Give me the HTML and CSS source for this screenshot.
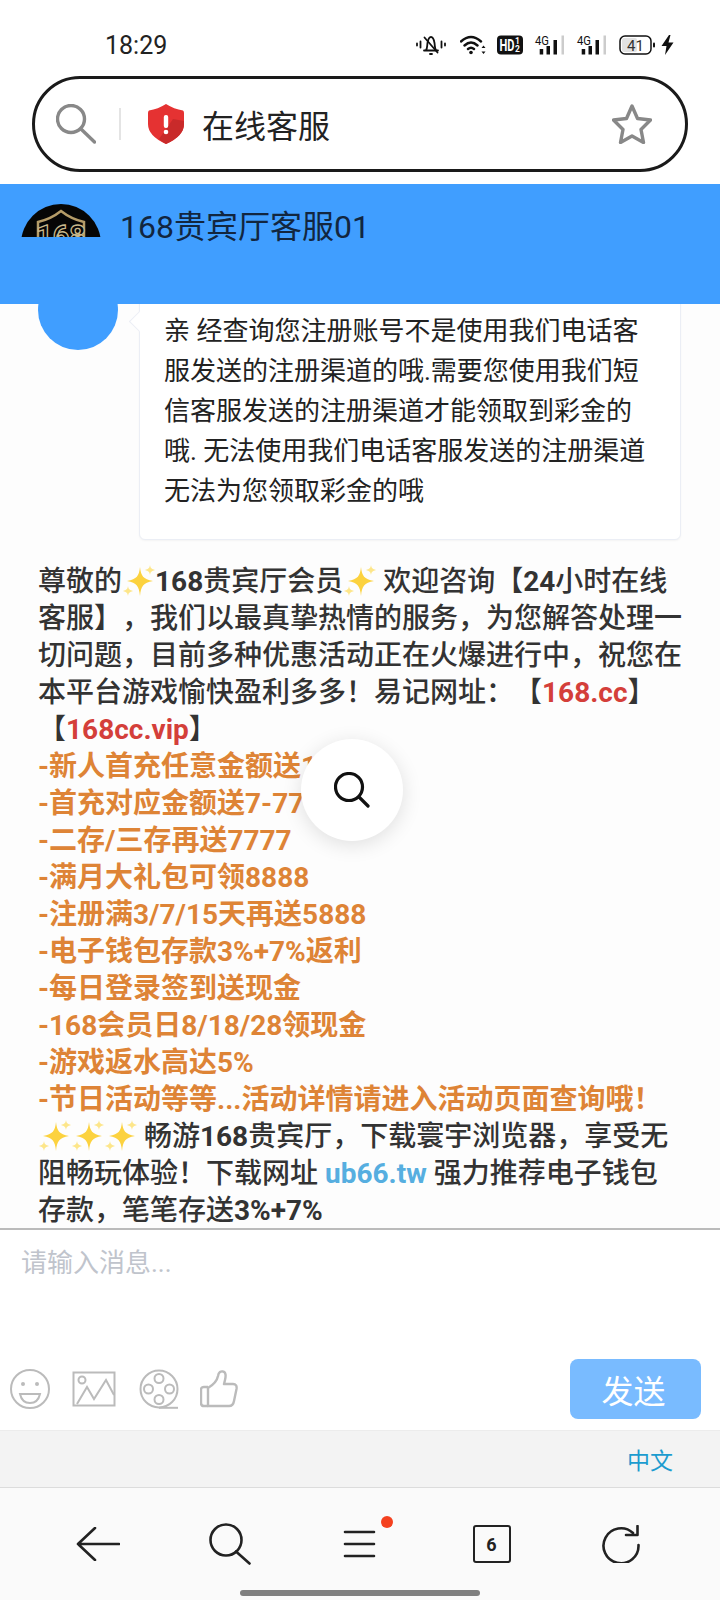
FILE: index.html
```html
<!DOCTYPE html>
<html>

<head>
  <title>在线客服</title>
  <link rel="stylesheet" href="styles.css">
</head>

<body>
  <svg class="defs" width="0" height="0">
    <symbol id="sparkle" viewBox="0 0 33 32">
      <path d="M18 2 C19 11 21 14 31 16 C21 18 19 21 18 31 C17 21 15 18 5 16 C15 14 17 11 18 2Z" fill="#fcd23f" />
      <path d="M28 0 C28.5 3 29.5 4 33 5 C29.5 6 28.5 7 28 10 C27.5 7 26.5 6 23 5 C26.5 4 27.5 3 28 0Z" fill="#fde68a" />
      <path d="M6 21 C6.5 24 7.5 25 11 26 C7.5 27 6.5 28 6 31 C5.5 28 4.5 27 1 26 C4.5 25 5.5 24 6 21Z" fill="#fde68a" />
    </symbol>
  </svg>

  <div class="app">
    <!-- status bar -->
    <div class="status">
      <span class="time">18:29</span>
      <div class="status-icons">
        <svg width="30" height="20" viewBox="0 0 30 20" fill="none" stroke="#111" stroke-width="1.8" stroke-linecap="round" stroke-linejoin="round">
          <path d="M1 8.5v2M4.5 6.5v6M25.5 6.5v6M29 8.5v2" />
          <path d="M8 15.5h14M10 15c1.5-2 1-4 1.5-7C12 5 13.5 2 15 2s3 3 3.5 6c.5 3 0 5 1.5 7" />
          <path d="M14 19h2M8.5 2.5l13 15" />
        </svg>
        <svg class="wifi" width="26" height="20" viewBox="0 0 26 20" fill="none" stroke="#111" stroke-width="2.4" stroke-linecap="round">
          <path d="M1 6.5Q11 -2.5 21 6.5M4.5 10.5Q11 4.5 17.5 10.5M8 14Q11 11.5 14 14" />
          <circle cx="11" cy="17.5" r="1.8" fill="#111" stroke="none" />
          <path d="M23.5 10.5l-2 2.5h4zM23.5 19l-2-2.5h4z" fill="#111" stroke="none" />
        </svg>
        <svg width="26" height="20" viewBox="0 0 26 20">
          <rect y="0.5" width="26" height="19" rx="4" fill="#111" />
          <text class="svg-text" x="2.5" y="15.5" font-size="16" font-weight="700" fill="#fff" textLength="15" lengthAdjust="spacingAndGlyphs">HD</text>
          <text class="svg-text" x="18" y="8.5" font-size="8.5" font-weight="700" fill="#fff">1</text>
          <text class="svg-text" x="18" y="17" font-size="8.5" font-weight="700" fill="#fff">2</text>
        </svg>
        <svg class="signal" width="30" height="20" viewBox="0 0 30 20">
          <text class="svg-text" x="0" y="10" font-size="13.5" fill="#111" textLength="14" lengthAdjust="spacingAndGlyphs">4G</text>
          <rect x="4.7" y="14" width="3.5" height="5.5" fill="#111" />
          <rect x="11.5" y="11" width="3.5" height="8.5" fill="#111" />
          <rect x="18.5" y="5" width="3.5" height="14.5" fill="#111" />
          <rect x="26.5" y="0.5" width="2.5" height="19" fill="#ccc" />
        </svg>
        <svg class="signal" width="30" height="20" viewBox="0 0 30 20">
          <text class="svg-text" x="0" y="10" font-size="13.5" fill="#111" textLength="14" lengthAdjust="spacingAndGlyphs">4G</text>
          <rect x="4.7" y="14" width="3.5" height="5.5" fill="#111" />
          <rect x="11.5" y="11" width="3.5" height="8.5" fill="#111" />
          <rect x="18.5" y="5" width="3.5" height="14.5" fill="#111" />
          <rect x="26.5" y="0.5" width="2.5" height="19" fill="#ccc" />
        </svg>
        <svg width="36" height="20" viewBox="0 0 36 20">
          <rect x="3" y="3" width="15" height="14" rx="2" fill="#e2e2e2" />
          <rect x="1" y="1" width="31" height="18" rx="5" fill="none" stroke="#111" stroke-width="1.5" />
          <rect x="34" y="7.5" width="2" height="5" rx="1" fill="#111" />
          <text class="svg-text" x="16.5" y="15.5" font-size="15" fill="#333" text-anchor="middle">41</text>
        </svg>
        <svg class="bolt" width="13" height="20" viewBox="0 0 13 20">
          <path d="M8 0 L0.5 11 H5.5 L4 20 L12.5 7.5 H7.5 L9.5 0Z" fill="#111" />
        </svg>
      </div>
    </div>

    <!-- address bar -->
    <div class="address">
      <svg class="address-search" width="40" height="40" viewBox="0 0 40 40" fill="none" stroke="#888" stroke-width="3.4" stroke-linecap="round">
        <circle cx="15" cy="15" r="13.5" />
        <path d="M25 25L38.5 38" />
      </svg>
      <span class="address-sep"></span>
      <svg class="shield" width="38" height="42" viewBox="0 0 38 42">
        <path d="M19 1Q27 6 36 7.5Q37 8 37 10V21Q37 33 19 41Q1 33 1 21V10Q1 8 2 7.5Q11 6 19 1Z" fill="#e53232" />
        <path d="M12 36L26 16L37 18V21Q37 33 19 41Q15 39 12 36Z" fill="#c92a2a" />
        <rect x="16.8" y="12" width="4.4" height="13" rx="2" fill="#fff" />
        <circle cx="19" cy="29" r="2.3" fill="#fff" />
      </svg>
      <span class="address-text">在线客服</span>
      <svg class="star" width="40" height="40" viewBox="0 0 40 40" fill="none" stroke="#888" stroke-width="3.4" stroke-linejoin="round">
        <path d="M20 2L25.5 14.5L38.5 16L29 25.5L31.5 38.5L20 32L8.5 38.5L11 25.5L1.5 16L14.5 14.5Z" />
      </svg>
    </div>

    <!-- chat header -->
    <div class="chat-header">
      <div class="logo-clip">
        <svg width="80" height="80" viewBox="0 0 80 80">
          <circle cx="40" cy="40" r="40" fill="#060606" />
          <path d="M17 18Q30 15 40 7Q50 15 63 18V60H17Z" fill="none" stroke="#b59c68" stroke-width="2.5" />
          <text class="svg-text" x="40" y="42" font-size="29" font-weight="700" fill="#060606" stroke="#c8b88c" stroke-width="1.3" text-anchor="middle">168</text>
        </svg>
      </div>
      <span class="chat-title">168贵宾厅客服01</span>
    </div>

    <!-- messages -->
    <div class="chat-body">
      <div class="msg">
        <div class="msg-avatar"></div>
        <div class="bubble">亲 经查询您注册账号不是使用我们电话客服发送的注册渠道的哦.需要您使用我们短信客服发送的注册渠道才能领取到彩金的哦. 无法使用我们电话客服发送的注册渠道无法为您领取彩金的哦</div>
      </div>
      <div class="welcome">
        尊敬的<svg class="sparkle"><use href="#sparkle" /></svg><b>168</b>贵宾厅会员<svg class="sparkle"><use href="#sparkle" /></svg> 欢迎咨询【<b>24</b>小时在线客服】，我们以最真挚热情的服务，为您解答处理一切问题，目前多种优惠活动正在火爆进行中，祝您在本平台游戏愉快盈利多多！易记网址：【<b class="red">168.cc</b>】<br>【<b class="red">168cc.vip</b>】
        <div class="promo">-新人首充任意金额送1888</div>
        <div class="promo">-首充对应金额送7-7777</div>
        <div class="promo">-二存/三存再送7777</div>
        <div class="promo">-满月大礼包可领8888</div>
        <div class="promo">-注册满3/7/15天再送5888</div>
        <div class="promo">-电子钱包存款3%+7%返利</div>
        <div class="promo">-每日登录签到送现金</div>
        <div class="promo">-168会员日8/18/28领现金</div>
        <div class="promo">-游戏返水高达5%</div>
        <div class="promo">-节日活动等等...活动详情请进入活动页面查询哦！</div>
        <svg class="sparkle"><use href="#sparkle" /></svg><svg class="sparkle"><use href="#sparkle" /></svg><svg class="sparkle"><use href="#sparkle" /></svg> 畅游<b>168</b>贵宾厅，下载寰宇浏览器，享受无阻畅玩体验！下载网址 <b class="blue">ub66.tw</b> 强力推荐电子钱包存款，笔笔存送<b>3%+7%</b>
      </div>
      <div class="float-search">
        <svg width="36" height="36" viewBox="0 0 36 36" fill="none" stroke="#111" stroke-width="3.2" stroke-linecap="round">
          <circle cx="15" cy="15" r="13.5" />
          <path d="M25 25L34 34" />
        </svg>
      </div>
    </div>

    <!-- compose box -->
    <div class="compose">
      <div class="placeholder">请输入消息...</div>
      <div class="compose-bar">
        <div class="tools">
          <svg width="40" height="40" viewBox="0 0 40 40" fill="none" stroke="#bbb" stroke-width="2">
            <circle cx="20" cy="20" r="19" />
            <circle cx="13" cy="15" r="2" fill="#bbb" stroke="none" />
            <circle cx="27" cy="15" r="2" fill="#bbb" stroke="none" />
            <path d="M10 25H30Q28 34 20 34Q12 34 10 25Z" />
          </svg>
          <svg width="44" height="36" viewBox="0 0 44 36" fill="none" stroke="#bbb" stroke-width="2">
            <rect x="1.5" y="1.5" width="41" height="33" />
            <circle cx="10" cy="9" r="3.5" />
            <path d="M5 33L15 16L22 28L34 9L42 24" />
          </svg>
          <svg class="film" width="40" height="40" viewBox="0 0 40 40" fill="none" stroke="#bbb" stroke-width="2">
            <circle cx="20" cy="20" r="18.5" />
            <circle cx="20" cy="9.5" r="4.5" />
            <circle cx="20" cy="30.5" r="4.5" />
            <circle cx="9.5" cy="20" r="4.5" />
            <circle cx="30.5" cy="20" r="4.5" />
            <path d="M20 38.8H39" />
          </svg>
          <svg width="38" height="38" viewBox="0 0 38 38" fill="none" stroke="#bbb" stroke-width="2.4" stroke-linejoin="round">
            <path d="M8 36V18C13 15 17 11 18 6C18.5 2 21 1 23 1.5C26 2 26 6 25 10L24 14H33C36 14 37 16 36.5 19L34 31C33.5 34 32 36 29 36Z" />
            <path d="M8 17H4C2 17 1 18 1 20V33C1 35 2 36 4 36H8" />
          </svg>
        </div>
        <button class="send">发送</button>
      </div>
    </div>

    <div class="lang-bar"><span class="lang">中文</span></div>

    <!-- browser nav -->
    <div class="nav">
      <svg class="nav-back" width="44" height="34" viewBox="0 0 44 34" fill="none" stroke="#222" stroke-width="2.6" stroke-linecap="round" stroke-linejoin="round">
        <path d="M43 17H2M19 1L2 17L19 33" />
      </svg>
      <svg width="42" height="42" viewBox="0 0 42 42" fill="none" stroke="#222" stroke-width="2.6" stroke-linecap="round">
        <circle cx="17" cy="17" r="15.5" />
        <path d="M27 28.5L40.5 40.5" />
      </svg>
      <svg width="64" height="60" viewBox="0 0 64 60" fill="none" stroke="#222" stroke-width="2.6" stroke-linecap="round">
        <path d="M16 18H45M16 30H45M16 42H45" />
        <circle cx="58" cy="8" r="6" fill="#f4411f" stroke="none" />
      </svg>
      <div class="tab-count">6</div>
      <svg class="nav-reload" width="38" height="38" viewBox="0 0 38 38" fill="none" stroke="#222" stroke-width="2.6" stroke-linecap="round" stroke-linejoin="round">
        <path d="M31 8A17.5 17.5 0 1 0 36.5 20" />
        <path d="M24 10H35.5V1" />
      </svg>
    </div>
    <div class="home-bar"></div>
  </div>
</body>

</html>
```

FILE: styles.css
```css
* {
  box-sizing: border-box;
}

body {
  margin: 0;
  background-color: #fff;
  font-family: Roboto, "Noto Sans CJK SC", sans-serif;
  text-spacing-trim: space-all;
}

.defs {
  position: absolute;
}

.app {
  position: relative;
  display: flex;
  flex-direction: column;
  width: 720px;
  height: 1600px;
  overflow: hidden;
}

.svg-text {
  font-family: Roboto, sans-serif;
}

.status {
  display: flex;
  align-items: center;
  justify-content: space-between;
  height: 76px;
  padding: 14px 46px 0 105px;
  flex-shrink: 0;
}

.time {
  font-size: 25px;
  color: #222;
}

.status-icons {
  display: flex;
  align-items: center;
  gap: 12px;
}

.signal {
  overflow: visible;
}

.wifi {
  margin: 0 -1px 0 2px;
}

.bolt {
  margin-left: -6px;
}

.address {
  display: flex;
  align-items: center;
  width: 656px;
  height: 96px;
  margin-left: 32px;
  padding: 0 33px 0 21px;
  border: 3px solid #1a1a1a;
  border-radius: 48px;
  flex-shrink: 0;
}

.address-sep {
  width: 2px;
  height: 32px;
  margin: 0 26px 0 23px;
  background-color: #e4e4e4;
}

.address-text {
  margin-left: 17px;
  font-size: 32px;
  color: #222;
}

.star {
  margin-left: auto;
}

.chat-header {
  display: flex;
  align-items: flex-start;
  height: 120px;
  margin-top: 12px;
  padding: 20px 0 0 21px;
  background-color: #409eff;
  flex-shrink: 0;
}

.logo-clip {
  width: 80px;
  height: 33px;
  overflow: hidden;
}

.chat-title {
  margin: 1px 0 0 19px;
  font-size: 32px;
  line-height: 44px;
  color: #12263f;
}

.chat-body {
  position: relative;
  display: flex;
  flex-direction: column;
  justify-content: flex-end;
  flex: 1;
  min-height: 0;
  overflow: hidden;
  background-color: #fdfdfd;
}

.msg {
  display: flex;
  align-items: flex-start;
  flex-shrink: 0;
  margin-bottom: 23px;
  padding-left: 38px;
}

.msg-avatar {
  width: 80px;
  height: 80px;
  border-radius: 50%;
  background-color: #409eff;
  flex-shrink: 0;
}

.bubble {
  position: relative;
  width: 542px;
  margin: 21px 0 0 21px;
  padding: 19px 24px 28px 24px;
  border: 1px solid #ebeef5;
  border-radius: 6px;
  background-color: #fff;
  font-size: 26px;
  line-height: 40px;
  color: #222;
  box-shadow: 0 1px 2px rgba(0, 0, 0, 0.04);
}

.bubble::before {
  content: "";
  position: absolute;
  left: -8px;
  top: 22px;
  width: 14px;
  height: 14px;
  background-color: #fff;
  border-left: 1px solid #ebeef5;
  border-bottom: 1px solid #ebeef5;
  transform: rotate(45deg);
}

.welcome {
  flex-shrink: 0;
  margin-bottom: -1px;
  padding: 0 36px 0 38px;
  font-size: 28px;
  font-weight: 500;
  line-height: 37px;
  color: #333;
}

.sparkle {
  width: 33px;
  height: 32px;
  vertical-align: -6px;
}

.welcome b {
  font-weight: 700;
}

.welcome .red {
  color: #d43f3a;
}

.welcome .blue {
  color: #56aee0;
}

.promo {
  font-weight: 700;
  color: #de8436;
}

.float-search {
  position: absolute;
  left: 301px;
  top: 435px;
  display: flex;
  align-items: center;
  justify-content: center;
  width: 102px;
  height: 102px;
  border-radius: 50%;
  background-color: #fff;
  box-shadow: 0 4px 20px rgba(0, 0, 0, 0.12);
}

.compose {
  display: flex;
  flex-direction: column;
  justify-content: space-between;
  height: 202px;
  padding: 17px 0 11px;
  border-top: 2px solid #bbb;
  background-color: #fff;
  flex-shrink: 0;
}

.placeholder {
  padding-left: 21px;
  font-size: 26px;
  line-height: 32px;
  color: #c0c4cc;
}

.compose-bar {
  display: flex;
  align-items: center;
  justify-content: space-between;
  padding: 0 19px 0 10px;
}

.tools {
  display: flex;
  align-items: center;
  gap: 22px;
}

.film {
  margin: 0 -1px 0 1px;
}

.send {
  width: 131px;
  height: 60px;
  padding: 0 4px 0 0;
  border: none;
  border-radius: 8px;
  background-color: #79bbff;
  color: #fff;
  font-family: inherit;
  font-size: 32px;
}

.lang-bar {
  display: flex;
  align-items: center;
  justify-content: flex-end;
  height: 58px;
  padding: 0 47px 1px 0;
  border-top: 1px solid #ececec;
  border-bottom: 1px solid #dcdcdc;
  background-color: #f3f3f3;
  flex-shrink: 0;
}

.lang {
  font-size: 23px;
  color: #1c9ccf;
}

.nav {
  display: grid;
  grid-template-columns: repeat(5, 131px);
  align-items: center;
  justify-items: center;
  height: 112px;
  padding-left: 33px;
  background-color: #fafafa;
  flex-shrink: 0;
}

.nav-back {
  margin-right: 2px;
}

.nav-reload {
  margin-right: 3px;
}

.tab-count {
  display: flex;
  align-items: center;
  justify-content: center;
  width: 38px;
  height: 38px;
  border: 2.6px solid #222;
  border-radius: 3px;
  font-size: 18px;
  font-weight: 700;
  color: #222;
}

.home-bar {
  position: absolute;
  left: 240px;
  bottom: 4px;
  width: 240px;
  height: 6px;
  border-radius: 3px;
  background-color: #808080;
}
```
